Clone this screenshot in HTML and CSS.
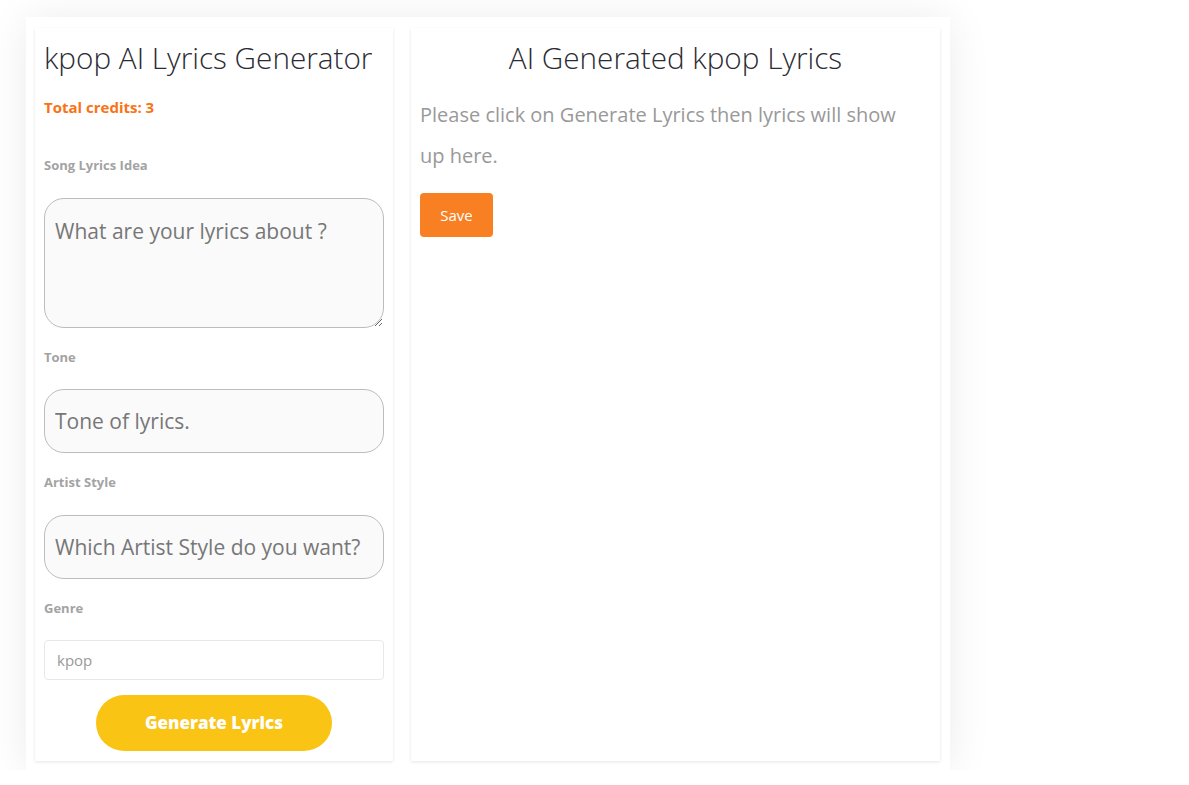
FILE: index.html
```html
<!DOCTYPE html>
<html lang="en">

<head>
  <meta charset="UTF-8">
  <meta name="viewport" content="width=device-width, initial-scale=1.0">
  <title>kpop AI Lyrics Generator</title>
  <link rel="stylesheet" href="styles.css">
</head>

<body>
  <div class="page">
    <div class="container">
      <!-- form column -->
      <div class="card form-card">
        <h1 class="title">kpop AI Lyrics Generator</h1>
        <p class="credits">Total credits: 3</p>

        <label class="label label-first" for="idea">Song Lyrics Idea</label>
        <textarea id="idea" class="field field-area" placeholder="What are your lyrics about ?"></textarea>

        <label class="label" for="tone">Tone</label>
        <input id="tone" class="field field-line" type="text" placeholder="Tone of lyrics.">

        <label class="label" for="artist">Artist Style</label>
        <input id="artist" class="field field-line" type="text" placeholder="Which Artist Style do you want?">

        <label class="label" for="genre">Genre</label>
        <input id="genre" class="genre" type="text" value="kpop" readonly>

        <div class="actions">
          <button class="generate">Generate Lyrics</button>
        </div>
      </div>

      <!-- output column -->
      <div class="card output-card">
        <h2 class="title title-center">AI Generated kpop Lyrics</h2>
        <p class="hint">Please click on Generate Lyrics then lyrics will show up here.</p>
        <button class="save">Save</button>
      </div>
    </div>
  </div>
</body>

</html>
```

FILE: styles.css
```css
body {
  margin: 0;
  background: #fff;
  font-family: "Open Sans", "Noto Sans", sans-serif;
}

.page {
  padding: 17px 0 0 26px;
}

.container {
  display: flex;
  gap: 18px;
  width: 924px;
  height: 753px;
  box-sizing: border-box;
  padding: 11px 10px 9px 9px;
  background: #fff;
  box-shadow: 0 2px 40px rgba(0, 0, 0, 0.08);
}

.card {
  display: flex;
  flex-direction: column;
  box-sizing: border-box;
  padding: 0 9px;
  background: #fff;
  box-shadow: 0 1px 3px rgba(0, 0, 0, 0.1);
}

.form-card {
  width: 358px;
}

.output-card {
  width: 529px;
}

.title {
  margin: 10px 0 0;
  font-size: 29.7px;
  font-weight: 300;
  line-height: 40px;
  color: #2b2b33;
}

.title-center {
  text-align: center;
}

.credits {
  margin: 19px 0 0;
  font-size: 15px;
  font-weight: 700;
  color: #f97316;
}

.label {
  display: block;
  margin: 20px 0 0;
  font-size: 13px;
  font-weight: 700;
  color: #a3a3a3;
}

.label-first {
  margin-top: 39px;
}

.field {
  display: block;
  width: 100%;
  box-sizing: border-box;
  margin-top: 23.5px;
  padding: 0 10px;
  border: 1px solid #bcbcbc;
  border-radius: 20px;
  background: #fafafa;
  font-family: inherit;
  font-size: 21px;
  color: #555;
}

.field::placeholder {
  color: #777;
}

.field-area {
  height: 130px;
  padding-top: 18px;
  resize: vertical;
}

.field-line {
  height: 64px;
}

.genre {
  display: block;
  width: 100%;
  box-sizing: border-box;
  margin-top: 23px;
  height: 40px;
  padding: 0 12px;
  border: 1px solid #e8e8e8;
  border-radius: 4px;
  background: #fff;
  font-family: inherit;
  font-size: 15px;
  color: #999;
  outline: none;
}

.actions {
  display: flex;
  justify-content: center;
  margin-top: 15px;
}

.generate {
  width: 236px;
  height: 56px;
  border: 0;
  border-radius: 28px;
  background: #fac415;
  font-family: inherit;
  font-size: 17px;
  font-weight: 800;
  color: #fff;
}

.hint {
  margin: 16px 0 0;
  padding-right: 10px;
  font-size: 20px;
  line-height: 41px;
  color: #999;
}

.save {
  align-self: flex-start;
  margin-top: 17px;
  width: 73px;
  height: 44px;
  border: 0;
  border-radius: 4px;
  background: #f88022;
  font-family: inherit;
  font-size: 15px;
  color: #fff;
}
```
